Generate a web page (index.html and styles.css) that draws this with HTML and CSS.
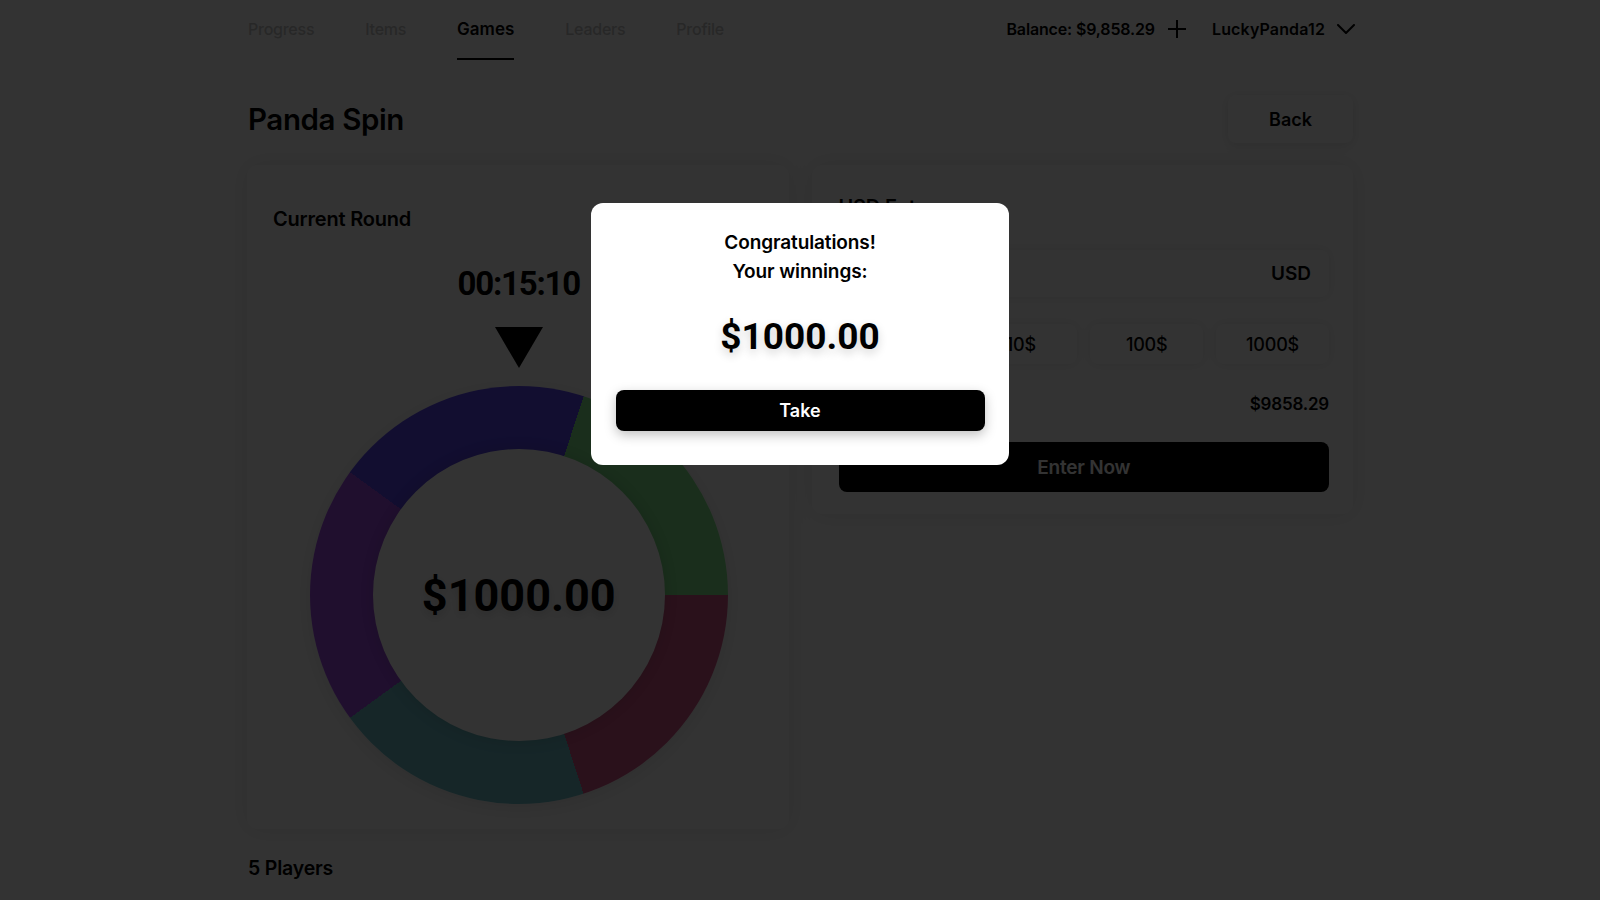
FILE: index.html
```html
<!DOCTYPE html>
<html lang="en">
<head>
<meta charset="utf-8">
<title>Panda Spin</title>
<link rel="stylesheet" href="styles.css">
</head>
<body>
<div class="page">
  <header class="header">
    <nav class="nav">
      <a class="nav-link">Progress</a>
      <a class="nav-link">Items</a>
      <a class="nav-link active">Games</a>
      <a class="nav-link">Leaders</a>
      <a class="nav-link">Profile</a>
    </nav>
    <div class="account">
      <span class="balance">Balance: $9,858.29</span>
      <svg class="plus" width="20" height="20" viewBox="0 0 20 20"><path d="M10 1v18M1 10h18" stroke="#000" stroke-width="2" fill="none"/></svg>
      <span class="user">LuckyPanda12</span>
      <svg class="chev" width="18" height="10" viewBox="0 0 18 10"><path d="M1 1l8 8 8-8" stroke="#000" stroke-width="2" fill="none" stroke-linecap="round" stroke-linejoin="round"/></svg>
    </div>
  </header>

  <div class="title-row">
    <h1 class="title">Panda Spin</h1>
    <button class="back">Back</button>
  </div>

  <div class="grid">
    <section class="card round">
      <h2 class="card-title">Current Round</h2>
      <div class="timer">00:15:10</div>
      <div class="pointer"></div>
      <div class="wheel">
        <div class="wheel-inner">$1000.00</div>
      </div>
    </section>

    <section class="card entry">
      <h2 class="card-title">USD Entry</h2>
      <div class="amount-input"><span>USD</span></div>
      <div class="quick">
        <button class="quick-btn">1$</button>
        <button class="quick-btn">10$</button>
        <button class="quick-btn">100$</button>
        <button class="quick-btn">1000$</button>
      </div>
      <div class="bal-row"><span>Balance</span><span>$9858.29</span></div>
      <button class="enter">Enter Now</button>
    </section>
  </div>

  <h3 class="players">5 Players</h3>
</div>

<div class="overlay"></div>
<div class="modal">
  <p class="modal-text">Congratulations!<br>Your winnings:</p>
  <div class="modal-amount">$1000.00</div>
  <button class="take">Take</button>
</div>
</body>
</html>
```

FILE: styles.css
```css
* { box-sizing: border-box; }
html, body { margin: 0; padding: 0; background: #fff; }
body {
  font-family: "Inter", "Liberation Sans", sans-serif;
  color: #000;
  height: 900px;
  overflow: hidden;
}
button { font-family: inherit; border: 0; background: none; padding: 0; cursor: pointer; color: inherit; }
h1, h2, h3, p { margin: 0; }

.page { width: 1106px; margin: 0 auto; }

.header { display: flex; justify-content: space-between; align-items: stretch; height: 60px; }
.nav { display: flex; gap: 51px; padding-left: 1px; }
.nav-link {
  display: flex; align-items: center; height: 60px;
  border-bottom: 2px solid transparent;
  font-size: 16px; font-weight: 500; color: #c4c4c4; letter-spacing: -0.25px;
}
.nav-link.active { color: #000; font-weight: 600; font-size: 17px; letter-spacing: 0; border-bottom-color: #000; }

.account { display: flex; align-items: center; padding-bottom: 3px; margin-right: -2px; }
.balance, .user { font-size: 16px; font-weight: 600; letter-spacing: -0.15px; }
.plus { margin-left: 12px; }
.user { margin-left: 25px; letter-spacing: 0.15px; }
.chev { margin-left: 12px; }

.title-row { display: flex; justify-content: space-between; align-items: center; margin-top: 35px; height: 48px; }
.title { font-size: 29.5px; font-weight: 600; letter-spacing: -0.4px; padding-left: 1px; }
.back {
  width: 125px; height: 48px; border-radius: 8px; background: #fff;
  box-shadow: 0 2px 12px rgba(0,0,0,0.12);
  font-size: 18px; font-weight: 600;
}

.grid { display: grid; grid-template-columns: 1fr 1fr; gap: 23px; margin-top: 22px; align-items: start; }
.card { background: #fff; border-radius: 10px; box-shadow: 0 0 24px rgba(0,0,0,0.1); }
.card-title { font-size: 20px; font-weight: 600; line-height: 24px; letter-spacing: -0.2px; }

.round { padding: 42px 24px 25px 26px; }
.timer {
  margin-top: 33px; text-align: center;
  font-family: "Roboto", "Inter", sans-serif; font-weight: 700; font-size: 33px; line-height: 40px;
  letter-spacing: -1.2px;
}
.pointer {
  width: 0; height: 0; margin: 23px auto 0;
  border-left: 24px solid transparent; border-right: 24px solid transparent;
  border-top: 41px solid #000;
}
.wheel {
  width: 418px; height: 418px; margin: 18px auto 0; border-radius: 50%;
  background: conic-gradient(from -54deg,
    #5a46f0 0deg 72deg,
    #82e68c 72deg 144deg,
    #d25587 144deg 216deg,
    #6ebec8 216deg 288deg,
    #a04be6 288deg 360deg);
  display: flex; align-items: center; justify-content: center;
  box-shadow: 0 4px 20px rgba(0,0,0,0.1);
}
.wheel-inner {
  width: 292px; height: 292px; border-radius: 50%; background: #fff;
  box-shadow: 0 0 20px rgba(0,0,0,0.15);
  display: flex; align-items: center; justify-content: center;
  font-family: "Roboto", "Inter", sans-serif; font-weight: 700; font-size: 45px;
  text-shadow: 0 4px 10px rgba(0,0,0,0.15);
}

.entry { padding: 30px 24px 22px 27px; }
.amount-input {
  margin-top: 31px; height: 47px; border-radius: 8px; background: #fff;
  box-shadow: 0 0 12px rgba(0,0,0,0.1);
  display: flex; justify-content: flex-end; align-items: center; padding-right: 18px;
  font-size: 19px; font-weight: 600;
}
.quick { margin-top: 27px; display: grid; grid-template-columns: repeat(4, 1fr); gap: 13px; }
.quick-btn {
  height: 40px; border-radius: 8px; background: #fff;
  box-shadow: 0 0 12px rgba(0,0,0,0.1);
  font-size: 18px; font-weight: 500; letter-spacing: -0.2px;
}
.bal-row { margin-top: 28px; display: flex; justify-content: space-between; font-size: 17px; font-weight: 600; line-height: 24px; letter-spacing: -0.2px; }
.enter {
  margin-top: 26px; width: 100%; height: 50px; border-radius: 8px; background: #000; color: #fff;
  font-size: 19px; font-weight: 600; letter-spacing: -0.2px;
}

.players { margin-top: 27px; font-size: 19.5px; font-weight: 600; line-height: 24px; letter-spacing: -0.2px; padding-left: 1px; }

.overlay { position: fixed; inset: 0; background: rgba(0,0,0,0.8); }
.modal {
  position: fixed; top: 203px; left: 50%; transform: translateX(-50%);
  width: 418px; padding: 26px 24.5px 34px; background: #fff; border-radius: 12px;
  text-align: center;
}
.modal-text { font-size: 19px; font-weight: 600; line-height: 28.5px; letter-spacing: -0.1px; }
.modal-amount {
  margin-top: 29px; font-family: "Roboto", "Inter", sans-serif; font-weight: 700; font-size: 37px; line-height: 44px;
  text-shadow: 0 4px 10px rgba(0,0,0,0.18);
}
.take {
  display: block; margin-top: 31px; width: 100%; height: 41px; border-radius: 8px;
  background: #000; color: #fff; font-size: 18px; font-weight: 600;
  box-shadow: 0 4px 12px rgba(0,0,0,0.25);
}
```
